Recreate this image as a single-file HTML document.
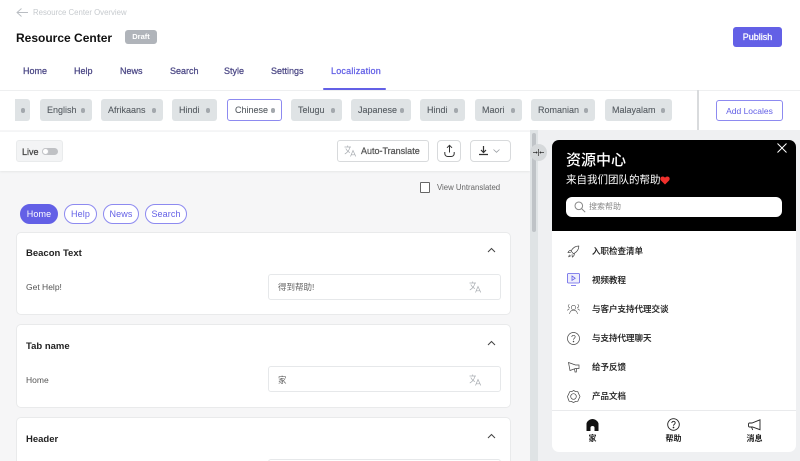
<!DOCTYPE html>
<html><head><meta charset="utf-8">
<style>
html,body{margin:0;padding:0;width:800px;height:461px;overflow:hidden;background:#fff}
body{position:relative;font-family:"Liberation Sans","Noto Sans CJK SC",sans-serif;color:#333;filter:blur(.25px)}
.a{position:absolute;box-sizing:border-box}
.t{position:absolute;white-space:nowrap;line-height:12px;height:12px}
.sb{-webkit-text-stroke:.25px currentColor}
.chip{position:absolute;top:99px;height:22px;background:#dfe3e5;border-radius:3px;font-size:9px;line-height:23px;color:#555b61;padding-left:7px;box-sizing:border-box;white-space:nowrap;-webkit-text-stroke:.1px currentColor}
.chip i{position:absolute;right:7px;top:9px;width:4.500px;height:4.500px;border-radius:50%;background:#a3a8ad}
.tab{position:absolute;top:65px;font-size:9px;line-height:12px;color:#4b4785;white-space:nowrap;-webkit-text-stroke:.25px currentColor}
.pill{position:absolute;top:204px;height:20px;border:1px solid #8d8af0;border-radius:10px;font-size:9px;line-height:18px;text-align:center;color:#6360e6;box-sizing:border-box;background:#fff;letter-spacing:.1px}
.card{position:absolute;left:16px;width:495px;background:#fff;border:1px solid #e9eaeb;border-radius:5px;box-sizing:border-box}
.inp{position:absolute;left:268px;width:233px;height:26px;background:#fff;border:1px solid #e6e8ea;border-radius:3px;box-sizing:border-box}
.h{position:absolute;left:26px;font-size:9.500px;font-weight:700;color:#222;line-height:12px}
.l{position:absolute;left:26px;font-size:8.500px;color:#555;line-height:12px}
.v{position:absolute;left:278px;font-size:8.500px;color:#666;line-height:12px}
.li{position:absolute;left:592px;font-size:8.500px;color:#222;line-height:12px;font-weight:500;white-space:nowrap;-webkit-text-stroke:.12px currentColor}
.nv{position:absolute;font-size:8px;font-weight:700;color:#222;line-height:10px;text-align:center;width:40px}
svg{position:absolute;overflow:visible}
</style></head><body>

<svg style="left:16px;top:7px" width="13" height="11" viewBox="0 0 13 11" fill="none" stroke="#b9bdc2" stroke-width=".9"><path d="M12 5.500H1M5.500 1.500L1 5.500l4.500 4"/></svg>
<div class="t" style="left:33px;top:6.500px;font-size:7.800px;color:#c6cace">Resource Center Overview</div>
<div class="t" style="left:16px;top:32px;font-size:12px;font-weight:700;color:#111">Resource Center</div>
<div class="a" style="left:125px;top:30px;width:32px;height:14px;background:#b0b4ba;border-radius:3px;color:#fff;font-size:7.500px;font-weight:700;line-height:14px;text-align:center">Draft</div>
<div class="a sb" style="left:733px;top:27px;width:49px;height:20px;background:#6360e6;border-radius:3px;color:#fff;font-size:9px;line-height:20px;text-align:center">Publish</div>

<div class="tab" style="left:23px">Home</div>
<div class="tab" style="left:74px">Help</div>
<div class="tab" style="left:120px">News</div>
<div class="tab" style="left:170px">Search</div>
<div class="tab" style="left:224px">Style</div>
<div class="tab" style="left:271px">Settings</div>
<div class="tab" style="left:331px;color:#6360e6;letter-spacing:.2px">Localization</div>
<div class="a" style="left:323px;top:88px;width:63px;height:2px;background:#6360e6;border-radius:1px"></div>
<div class="a" style="left:0;top:90px;width:800px;height:1px;background:#eeeff0"></div>

<div class="chip" style="left:15px;width:15px;border-radius:0 3px 3px 0"><i style="right:5px"></i></div>
<div class="chip" style="left:40px;width:52px">English<i></i></div>
<div class="chip" style="left:101px;width:62px">Afrikaans<i></i></div>
<div class="chip" style="left:172px;width:45px">Hindi<i></i></div>
<div class="chip" style="left:227px;width:55px;background:#fff;border:1px solid #8d8af0;line-height:21px;padding-left:7px">Chinese<i style="right:6px;top:8px"></i></div>
<div class="chip" style="left:291px;width:51px">Telugu<i></i></div>
<div class="chip" style="left:351px;width:60px">Japanese<i></i></div>
<div class="chip" style="left:420px;width:45px">Hindi<i></i></div>
<div class="chip" style="left:475px;width:47px">Maori<i></i></div>
<div class="chip" style="left:531px;width:64px">Romanian<i></i></div>
<div class="chip" style="left:605px;width:67px">Malayalam<i></i></div>
<div class="a" style="left:697px;top:90px;width:2px;height:40px;background:#d9dbdd"></div>
<div class="a" style="left:716px;top:100px;width:67px;height:21px;border:1px solid #8d8af0;border-radius:3px;background:#fff;color:#6360e6;font-size:8.500px;line-height:20px;text-align:center">Add Locales</div>

<!-- main -->
<div class="a" style="left:0;top:130px;width:530px;height:331px;background:#f6f6f7"></div>
<div class="a" style="left:0;top:132px;width:530px;height:39px;background:#fff;box-shadow:0 1px 2px #e6e7e8"></div>
<div class="a" style="left:16px;top:140px;width:47px;height:22px;background:#f3f4f5;border:1px solid #e9ebec;border-radius:3px"></div>
<div class="t sb" style="left:22px;top:145.500px;font-size:9px;color:#444">Live</div>
<div class="a" style="left:42px;top:148px;width:16px;height:7px;border-radius:4px;background:#bfc1c4"></div>
<div class="a" style="left:42px;top:148px;width:7px;height:7px;border-radius:50%;background:#fff;border:1px solid #c5c7ca"></div>

<div class="a" style="left:337px;top:140px;width:92px;height:22px;background:#fff;border:1px solid #d8dadc;border-radius:3px"></div>
<svg style="left:344px;top:145px" width="13" height="12" viewBox="0 0 13 12" fill="none" stroke="#a8acb1" stroke-width=".7"><path d="M.5 2H7M3.700.5V2M6 2C5.500 5 3 8 .8 9M1.800 3.500C3 6 4.500 7 6 7.500M6.500 11.500L9 5.500l2.800 6M7.500 9.800h3.400"/></svg>
<div class="t sb" style="left:361px;top:145px;font-size:9px;color:#555">Auto-Translate</div>
<div class="a" style="left:437px;top:140px;width:24px;height:22px;background:#fff;border:1px solid #d8dadc;border-radius:4px"></div>
<svg style="left:443px;top:144px" width="13" height="14" viewBox="0 0 13 14" fill="none" stroke="#333" stroke-width="1"><path d="M6.500 8.500V1.500M4 3.800l2.500-2.500L9 3.800M1.800 8v1.500c0 1.800 1.400 3 3 3h3.400c1.600 0 3-1.200 3-3V8"/></svg>
<div class="a" style="left:470px;top:140px;width:41px;height:22px;background:#fff;border:1px solid #d8dadc;border-radius:4px"></div>
<svg style="left:478px;top:145px" width="26" height="12" viewBox="0 0 26 12" fill="none" stroke="#333" stroke-width="1"><path d="M5.500 1v6M3 5l2.500 2.500L8 5M1 9.500h9" stroke-width="1.200"/><path d="M15.500 4.500l3 2.800 3-2.800" stroke="#9a9ea3" stroke-width=".8"/></svg>

<div class="a" style="left:420px;top:182px;width:10px;height:11px;border:1px solid #666;border-radius:1px;background:#fff"></div>
<div class="t" style="left:437px;top:182px;font-size:7.800px;color:#666">View Untranslated</div>

<div class="pill" style="left:20px;width:38px;background:#6360e6;color:#fff;border-color:#6360e6">Home</div>
<div class="pill" style="left:64px;width:33px">Help</div>
<div class="pill" style="left:103px;width:36px">News</div>
<div class="pill" style="left:145px;width:42px">Search</div>

<div class="card" style="top:232px;height:83px"></div>
<div class="h" style="top:248px">Beacon Text</div>
<div class="l" style="top:281px">Get Help!</div>
<div class="inp" style="top:274px"></div>
<div class="v" style="top:281px">得到帮助!</div>

<div class="card" style="top:324px;height:84px"></div>
<div class="h" style="top:341px">Tab name</div>
<div class="l" style="top:374px">Home</div>
<div class="inp" style="top:366px"></div>
<div class="v" style="top:374px">家</div>

<div class="card" style="top:417px;height:60px;border-bottom:0"></div>
<div class="h" style="top:434px">Header</div>
<div class="inp" style="top:459px;height:20px"></div>

<svg style="left:487px;top:247px" width="9" height="6" viewBox="0 0 9 6" fill="none" stroke="#444" stroke-width="1"><path d="M1 5l3.500-3.500L8 5"/></svg>
<svg style="left:487px;top:340px" width="9" height="6" viewBox="0 0 9 6" fill="none" stroke="#444" stroke-width="1"><path d="M1 5l3.500-3.500L8 5"/></svg>
<svg style="left:487px;top:433px" width="9" height="6" viewBox="0 0 9 6" fill="none" stroke="#444" stroke-width="1"><path d="M1 5l3.500-3.500L8 5"/></svg>
<svg style="left:469px;top:281px" width="13" height="12" viewBox="0 0 13 12" fill="none" stroke="#a8acb1" stroke-width=".7"><path d="M.5 2H7M3.700.5V2M6 2C5.500 5 3 8 .8 9M1.800 3.500C3 6 4.500 7 6 7.500M6.500 11.500L9 5.500l2.800 6M7.500 9.800h3.400"/></svg>
<svg style="left:469px;top:374px" width="13" height="12" viewBox="0 0 13 12" fill="none" stroke="#a8acb1" stroke-width=".7"><path d="M.5 2H7M3.700.5V2M6 2C5.500 5 3 8 .8 9M1.800 3.500C3 6 4.500 7 6 7.500M6.500 11.500L9 5.500l2.800 6M7.500 9.800h3.400"/></svg>

<!-- splitter -->
<div class="a" style="left:530px;top:130px;width:8px;height:331px;background:#dfe3e5"></div>
<div class="a" style="left:538px;top:130px;width:262px;height:331px;background:#eff0f2"></div>
<div class="a" style="left:532px;top:133px;width:4px;height:99px;background:#bfc3c7;border-radius:2px"></div>
<div class="a" style="left:529.500px;top:144px;width:17px;height:17px;border-radius:50%;background:#d6d9db"></div>
<svg style="left:532.500px;top:149px" width="11" height="7" viewBox="0 0 11 7" fill="#333" stroke="#333" stroke-width=".7"><path d="M5.500 0v7M0 3.500h3.500M7.500 3.500H11" fill="none"/><path d="M4.800 3.500L3 2.300v2.400zM6.200 3.500L8 2.300v2.400z" stroke="none"/></svg>

<!-- phone -->
<div class="a" style="left:552px;top:140px;width:244px;height:312px;background:#fff;border-radius:7px;overflow:hidden">
  <div class="a" style="left:0;top:0;width:244px;height:91px;background:#000"></div>
</div>
<svg style="left:777px;top:143px" width="10" height="10" viewBox="0 0 10 10" stroke="#fff" stroke-width="1"><path d="M.5.500l9 9M9.500.500l-9 9"/></svg>
<div class="t" style="left:566px;top:151px;height:20px;line-height:20px;font-size:15px;color:#fff;font-weight:500">资源中心</div>
<div class="t" style="left:566px;top:173px;height:14px;line-height:14px;font-size:10.500px;color:#fff">来自我们团队的帮助</div>
<svg style="left:660px;top:176px" width="10" height="9" viewBox="0 0 11 10"><path fill="#f0302c" d="M5.500 9.500L1 5C-.5 3 .5.500 3 .5c1.100 0 2 .6 2.500 1.500C6 1.100 6.900.5 8 .5c2.500 0 3.500 2.500 2 4.500z"/></svg>
<div class="a" style="left:566px;top:197px;width:216px;height:20px;background:#fff;border-radius:6px"></div>
<svg style="left:574px;top:201px" width="12" height="12" viewBox="0 0 12 12" fill="none" stroke="#888" stroke-width="1"><circle cx="4.800" cy="4.800" r="3.800"/><path d="M7.600 7.600l3.600 3.600"/></svg>
<div class="t" style="left:589px;top:201px;font-size:8px;color:#888">搜索帮助</div>

<svg style="left:567px;top:245px" width="13" height="13" viewBox="0 0 13 13" fill="none" stroke="#444" stroke-width=".7"><path d="M11.800 1C8.500 1 6 2.500 4 6l2.500 2.800C9.800 7 12 4.500 11.800 1zM4.500 5.200C3 5 1.800 5.800 1 7.500l2.800.2M7.300 8.300c.2 1.500-.4 2.800-2 3.800L5 9.300M3 9.800c-.8.300-1.200 1-1.300 2 1-.1 1.700-.5 2-1.300"/></svg>
<svg style="left:567px;top:273px" width="13" height="14" viewBox="0 0 13 14" fill="none" stroke="#6360e6" stroke-width=".8"><rect x=".5" y=".5" width="12" height="9.500" rx="1" fill="#eeeefc"/><path d="M5 3l3.200 2.200L5 7.400z"/><path d="M4 12.500h5"/></svg>
<svg style="left:567px;top:303px" width="13" height="12" viewBox="0 0 13 12" fill="none" stroke="#555" stroke-width=".6"><circle cx="6.500" cy="4.500" r="2.200"/><path d="M2.500 11c.4-2.500 2-3.800 4-3.800s3.600 1.300 4 3.800M2.500 1.500a1.500 1.500 0 1 0 .5 3M.5 7.500c.3-1 1-1.500 2-1.700M10.500 1.500a1.500 1.500 0 1 1-.5 3M12.500 7.500c-.3-1-1-1.500-2-1.700"/></svg>
<svg style="left:567px;top:332px" width="13" height="13" viewBox="0 0 13 13" fill="none" stroke="#444" stroke-width=".7"><circle cx="6.500" cy="6.500" r="6"/><path d="M4.800 5c0-1 .8-1.700 1.700-1.700S8.200 4 8.200 4.900c0 1.300-1.700 1.400-1.700 2.800"/><circle cx="6.500" cy="9.500" r=".4" fill="#444"/></svg>
<svg style="left:568px;top:361px" width="12" height="12" viewBox="0 0 12 12" fill="none" stroke="#444" stroke-width=".7"><path d="M.5 1.500l7 2.500h3.500v3.500H7.500L2 9.500z"/><path d="M6.500 7.500l.5 3.500h1.300l.2-3.500"/></svg>
<svg style="left:567px;top:390px" width="13" height="13" viewBox="0 0 13 13" fill="none" stroke="#444" stroke-width=".7"><path d="M6.500.5l2 1 2.300.2.900 2.100 1.300 2.700-1.300 2.700-.9 2.100-2.300.2-2 1-2-1-2.300-.2-.9-2.100L.5 6.500l1.300-2.700.9-2.100 2.300-.2z"/><circle cx="6.500" cy="6.500" r="2.800"/></svg>

<div class="li" style="top:245px">入职检查清单</div>
<div class="li" style="top:274px">视频教程</div>
<div class="li" style="top:303px">与客户支持代理交谈</div>
<div class="li" style="top:332px">与支持代理聊天</div>
<div class="li" style="top:361px">给予反馈</div>
<div class="li" style="top:390px">产品文档</div>

<div class="a" style="left:552px;top:410px;width:244px;height:1px;background:#e9eaec"></div>
<svg style="left:586px;top:419px" width="13" height="12" viewBox="0 0 13 12"><path fill="#111" d="M6.500 0C4 0 1 2 .5 4.500V12h4V8.500c0-1 1-1.500 2-1.500s2 .5 2 1.500V12h4V4.500C12 2 9 0 6.500 0z"/></svg>
<svg style="left:667px;top:418px" width="13" height="13" viewBox="0 0 13 13" fill="none" stroke="#222" stroke-width=".9"><circle cx="6.500" cy="6.500" r="5.800"/><path d="M4.800 5c0-1 .8-1.700 1.700-1.700S8.200 4 8.200 4.900c0 1.300-1.700 1.400-1.700 2.800"/><circle cx="6.500" cy="9.500" r=".4" fill="#222"/></svg>
<svg style="left:748px;top:419px" width="13" height="12" viewBox="0 0 13 12" fill="none" stroke="#222" stroke-width=".9"><path d="M12 .8v9.900L4.500 8H1.500a1 1 0 0 1-1-1V5a1 1 0 0 1 1-1H4z"/><path d="M3.500 8l1.200 3"/></svg>
<div class="nv" style="left:572.500px;top:434px">家</div>
<div class="nv" style="left:653.500px;top:434px">帮助</div>
<div class="nv" style="left:734.500px;top:434px">消息</div>
</body></html>
